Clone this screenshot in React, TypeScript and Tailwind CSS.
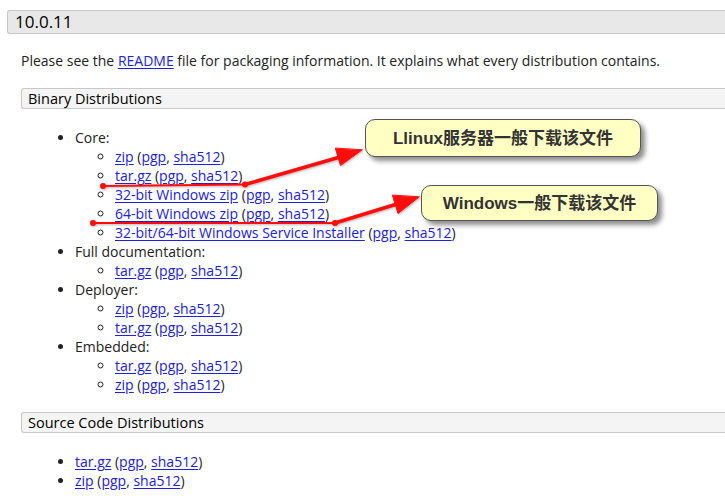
const core = [
  { name: 'zip' },
  { name: 'tar.gz' },
  { name: '32-bit Windows zip' },
  { name: '64-bit Windows zip' },
  { name: '32-bit/64-bit Windows Service Installer' },
];

const groups = [
  { title: 'Core:', items: core },
  { title: 'Full documentation:', items: [{ name: 'tar.gz' }] },
  { title: 'Deployer:', items: [{ name: 'zip' }, { name: 'tar.gz' }] },
  { title: 'Embedded:', items: [{ name: 'tar.gz' }, { name: 'zip' }] },
];

function Link({ children }: { children: React.ReactNode }) {
  return <a href="#" className="text-[#2020e0] underline underline-offset-[2px]">{children}</a>;
}

function Download({ name }: { name: string }) {
  return (
    <>
      <Link>{name}</Link> (<Link>pgp</Link>, <Link>sha512</Link>)
    </>
  );
}

function Callout({ text, className }: { text: string; className: string }) {
  return (
    <div
      className={`absolute flex items-center justify-center rounded-[10px] border border-[#555] bg-[#ffffc4] shadow-[4px_4px_5px_rgba(0,0,0,0.45)] text-[17px] font-bold text-[#333] font-['Liberation_Sans','Noto_Sans_CJK_SC',sans-serif] ${className}`}
    >
      {text}
    </div>
  );
}

export default function App() {
  return (
    <div className="relative w-[725px] h-[504px] overflow-hidden bg-white text-[#222] font-['Open_Sans',sans-serif] text-[14px] leading-[19px]">
      <div className="mt-[10px] ml-[7px] h-[24px] rounded-l-[3px] border border-r-0 border-[#c8c8c8] bg-[#e8e8e8] pl-[7px] text-[17px] leading-[22px] text-black">
        10.0.11
      </div>

      <p className="mt-[17px] ml-[21px]">
        Please see the <Link>README</Link> file for packaging information. It explains what every distribution contains.
      </p>

      <div className="mt-[18px] ml-[21px] h-[21px] rounded-l-[3px] border border-r-0 border-[#c8c8c8] bg-[#f4f4f4] pl-[6px] text-[14.5px] leading-[19px] text-black">
        Binary Distributions
      </div>

      <ul className="mt-[19px] ml-[75px] list-disc">
        {groups.map((g) => (
          <li key={g.title}>
            {g.title}
            <ul className="ml-[40px] list-[circle]">
              {g.items.map((it, i) => (
                <li key={i}>
                  <Download name={it.name} />
                </li>
              ))}
            </ul>
          </li>
        ))}
      </ul>

      <div className="mt-[18px] ml-[21px] h-[21px] rounded-l-[3px] border border-r-0 border-[#c8c8c8] bg-[#f4f4f4] pl-[6px] text-[14.5px] leading-[19px] text-black">
        Source Code Distributions
      </div>

      <ul className="mt-[19px] ml-[75px] list-disc">
        <li>
          <Download name="tar.gz" />
        </li>
        <li>
          <Download name="zip" />
        </li>
      </ul>

      <svg className="absolute left-0 top-0" width="725" height="504">
        <defs>
          <filter id="sh" x="-20%" y="-20%" width="140%" height="140%">
            <feDropShadow dx="1" dy="1" stdDeviation="1" floodColor="#000" floodOpacity="0.3" />
          </filter>
        </defs>
        <g filter="url(#sh)" fill="#ff0a0a" stroke="#ff0a0a" strokeLinecap="round" strokeLinejoin="round">
          <line x1="103" y1="186" x2="245" y2="184.5" strokeWidth="2" />
          <line x1="245" y1="184.5" x2="340" y2="157" strokeWidth="3.5" />
          <polygon points="362,150 340.5,165.5 335.5,148.5" strokeWidth="1" />
          <circle cx="103" cy="186" r="3" stroke="none" />
          <circle cx="245" cy="184.5" r="3" stroke="none" />

          <line x1="93" y1="223" x2="335" y2="223" strokeWidth="2" />
          <line x1="335" y1="223" x2="397" y2="204" strokeWidth="3.5" />
          <polygon points="419,197 398,213.5 392.5,195.5" strokeWidth="1" />
          <circle cx="93" cy="223" r="3" stroke="none" />
          <circle cx="335" cy="223" r="3" stroke="none" />
        </g>
      </svg>

      <Callout text="Llinux服务器一般下载该文件" className="left-[365px] top-[119px] w-[276px] h-[38px]" />
      <Callout text="Windows一般下载该文件" className="left-[421px] top-[185px] w-[237px] h-[36px]" />
    </div>
  );
}
